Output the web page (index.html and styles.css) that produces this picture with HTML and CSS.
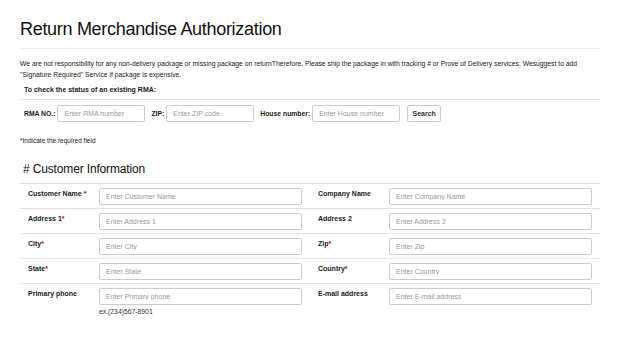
FILE: index.html
```html
<!DOCTYPE html>
<html lang="en">
<head>
    <meta charset="utf-8">
    <title>Return Merchandise Authorization</title>
    <link rel="stylesheet" href="styles.css">
</head>
<body>
    <div class="page">
        <h1 class="title">Return Merchandise Authorization</h1>

        <p class="notice">We are not responsibility for any non-delivery package or missing package on returnTherefore, Please ship the package in with tracking # or Prove of Delivery services. Wesuggest to add "Signature Required" Service if package is expensive.</p>

        <h4 class="check-title">To check the status of an existing RMA:</h4>

        <form class="check-row">
            <label>RMA NO.:</label>
            <input type="text" placeholder="Enter RMA number">
            <label>ZIP:</label>
            <input type="text" placeholder="Enter ZIP code">
            <label>House number:</label>
            <input type="text" placeholder="Enter House number">
            <button type="button">Search</button>
        </form>

        <p class="required-note">*Indicate the required field</p>

        <h2 class="section-title"># Customer Information</h2>

        <div class="info-table">
            <div class="info-row first">
                <label>Customer Name <span class="req">*</span></label>
                <input type="text" placeholder="Enter Customer Name">
                <label>Company Name</label>
                <input type="text" placeholder="Enter Company Name">
            </div>
            <div class="info-row">
                <label>Address 1<span class="req">*</span></label>
                <input type="text" placeholder="Enter Address 1">
                <label>Address 2</label>
                <input type="text" placeholder="Enter Address 2">
            </div>
            <div class="info-row">
                <label>City<span class="req">*</span></label>
                <input type="text" placeholder="Enter City">
                <label>Zip<span class="req">*</span></label>
                <input type="text" placeholder="Enter Zip">
            </div>
            <div class="info-row">
                <label>State<span class="req">*</span></label>
                <input type="text" placeholder="Enter State">
                <label>Country<span class="req">*</span></label>
                <input type="text" placeholder="Enter Country">
            </div>
            <div class="info-row last">
                <label>Primary phone</label>
                <div class="field">
                    <input type="text" placeholder="Enter Primary phone">
                    <span class="hint">ex.(234)567-8901</span>
                </div>
                <label>E-mail address</label>
                <div class="field">
                    <input type="text" placeholder="Enter E-mail address">
                </div>
            </div>
        </div>
    </div>
</body>
</html>
```

FILE: styles.css
```css
body {
    margin: 0;
    background-color: white;
    font-family: "Liberation Sans", Arial, sans-serif;
    color: #1a1a1a;
}

.page {
    width: 580px;
    padding: 0 20px;
}

.title {
    font-size: 18px;
    letter-spacing: -0.3px;
    font-weight: normal;
    color: #111;
    margin: 0;
    padding-top: 17px;
    padding-bottom: 7px;
    line-height: 24px;
    border-bottom: 1px solid #eee;
}

.notice {
    font-size: 6.78px;
    line-height: 11px;
    margin: 9px 0 0 0;
}

.check-title {
    font-size: 7px;
    font-weight: bold;
    margin: 5px 0 0 0;
    padding: 0 4px 4px 4px;
    line-height: 10px;
    border-bottom: 1px solid #e4e4e4;
}

input {
    font-family: "Liberation Sans", Arial, sans-serif;
    font-size: 7px;
    height: 17px;
    box-sizing: border-box;
    border: 1px solid #ccc;
    border-radius: 2px;
    padding: 0 6px;
    color: #555;
    background-color: white;
}

input::placeholder {
    color: #999;
}

.check-row {
    display: flex;
    align-items: center;
    padding: 5px 0 0 4px;
}

.check-row label {
    font-size: 6.8px;
    font-weight: bold;
    margin-right: 2px;
}

.check-row input {
    width: 88px;
    margin-right: 6px;
}

.check-row button {
    font-family: "Liberation Sans", Arial, sans-serif;
    font-size: 7px;
    font-weight: bold;
    height: 17px;
    width: 34px;
    padding: 0;
    border: 1px solid #ccc;
    border-radius: 2px;
    background-color: white;
    color: #333;
    margin-left: 1px;
}

.required-note {
    font-size: 6.5px;
    margin: 0;
    padding-top: 14px;
    line-height: 10px;
}

.section-title {
    font-size: 12px;
    letter-spacing: -0.15px;
    font-weight: normal;
    color: #111;
    margin: 0;
    padding: 16px 0 7px 3px;
    line-height: 14px;
    border-bottom: 1px solid #ddd;
}

.info-row {
    display: grid;
    grid-template-columns: 71px 203px 16px 71px 203px;
    padding: 4px 0 3px 8px;
    border-bottom: 1px solid #e6e6e6;
}

.info-row.first {
    border-bottom-color: #f0dede;
}

.info-row.last {
    border-bottom: none;
}

.info-row label {
    font-size: 7px;
    font-weight: bold;
    line-height: 10px;
    padding-top: 1px;
}

.info-row label:nth-of-type(2) {
    grid-column: 4;
}

.info-row input {
    width: 100%;
}

.field {
    display: flex;
    flex-direction: column;
}

.hint {
    font-size: 6.8px;
    color: #333;
    padding-top: 3px;
}

.req {
    color: #c00;
}
```
